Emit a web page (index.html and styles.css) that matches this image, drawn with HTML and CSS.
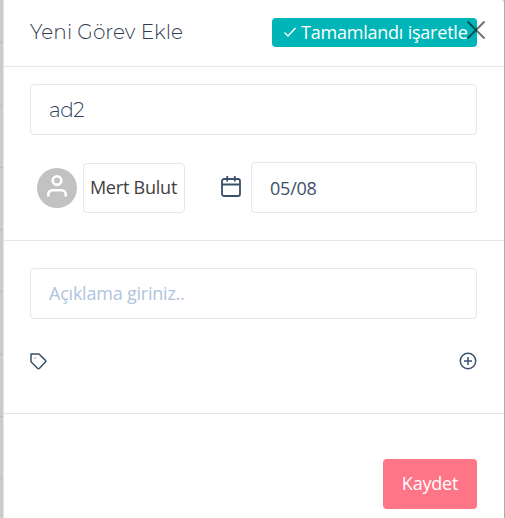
FILE: index.html
```html
<!DOCTYPE html>
<html lang="tr">
<head>
<meta charset="utf-8">
<title>Yeni Görev Ekle</title>
<link rel="stylesheet" href="styles.css">
</head>
<body>
<main class="modal">
  <header class="header">
    <h1 class="title">Yeni Görev Ekle</h1>
    <button class="complete">
      <svg width="14" height="12" viewBox="0 0 14 12" fill="none" stroke="currentColor" stroke-width="1.4"><path d="M1.5 6.5 5 10 12.5 2"/></svg>
      <span>Tamamlandı işaretle</span>
    </button>
    <button class="close" aria-label="Kapat">
      <svg width="20" height="20" viewBox="0 0 20 20" fill="none" stroke="#000" stroke-width="2"><path d="M1.5 1.5 18.5 18.5M18.5 1.5 1.5 18.5"/></svg>
    </button>
  </header>
  <section class="section details">
    <div class="field name">ad2</div>
    <div class="row">
      <div class="avatar">
        <svg width="20" height="22" viewBox="0 0 20 22" fill="none" stroke="#fff" stroke-width="2.6"><circle cx="10" cy="5.6" r="4.3"/><path d="M1.3 21.5v-2.2a4 4 0 0 1 4-4h9.4a4 4 0 0 1 4 4v2.2"/></svg>
      </div>
      <div class="assignee">Mert Bulut</div>
      <svg class="calendar" width="20" height="21" viewBox="0 0 20 21" fill="none" stroke="#3b506c" stroke-width="1.8"><rect x="1" y="3" width="18" height="17" rx="2"/><path d="M1 8.5h18M6.2 0v5.5M13.8 0v5.5"/></svg>
      <div class="field date">05/08</div>
    </div>
  </section>
  <section class="section notes">
    <div class="field placeholder">Açıklama giriniz..</div>
    <div class="tools">
      <svg width="17" height="17" viewBox="0 0 17 17" fill="none" stroke="#3b506c" stroke-width="1.5" stroke-linejoin="round"><path d="M1 1h8l6.4 6.4q.8.8 0 1.6L9.500 15.300q-1 .9-2 0L1 8.800Z"/><circle cx="5.100" cy="4.900" r=".6" fill="#3b506c" stroke="none"/></svg>
      <svg width="18" height="18" viewBox="0 0 18 18" fill="none" stroke="#3b506c" stroke-width="1.500"><circle cx="9" cy="9" r="7.700"/><path d="M5 9h8M9 5v8"/></svg>
    </div>
  </section>
  <footer class="footer"><button class="save">Kaydet</button></footer>
</main>
</body>
</html>
```
FILE: styles.css
```css
* { box-sizing: border-box; }

body {
  margin: 0;
  height: 518px;
  overflow: hidden;
  padding: 0 1px 0 3px;
  font-family: "Open Sans", sans-serif;
  font-size: 18px;
  letter-spacing: -.22px;
  color: #3b506c;
  background:
    linear-gradient(#adadad, #adadad) right / 1px 100% no-repeat,
    repeating-linear-gradient(#cbcbcb 0 61.300px, #b8b8b8 61.300px 62.300px) 0 -19px / 100% 600px;
}

button {
  border: 0;
  padding: 0;
  font: inherit;
  letter-spacing: inherit;
}

svg { display: block; flex: none; }

.modal {
  height: 518px;
  background: #fff;
  border-left: 1px solid #e5e5e5;
  border-top-right-radius: 3px;
}

.header {
  position: relative;
  height: 67px;
  padding: 0 27px 2px 26px;
  display: flex;
  align-items: center;
  justify-content: space-between;
  border-bottom: 1px solid #e4e6f0;
}

.title {
  margin: 0;
  font: 300 20px/24px Montserrat, Inter, sans-serif;
  letter-spacing: .06px;
  color: #2f3a4c;
  white-space: nowrap;
}

.complete {
  width: 205px;
  height: 29px;
  padding-left: 11px;
  display: flex;
  align-items: center;
  gap: 4px;
  border-radius: 4px;
  background: #00b5b8;
  color: #fff;
  white-space: nowrap;
}

.close {
  position: absolute;
  top: 20px;
  right: 18px;
  background: none;
  opacity: .55;
}

.section { padding: 0 27px 0 26px; }

.details {
  height: 174px;
  padding-top: 17px;
  border-bottom: 1px solid #e4e6f0;
}

.field {
  height: 51px;
  padding: 0 18px 1px;
  display: flex;
  align-items: center;
  border: 1px solid #e4e6f0;
  border-radius: 4px;
}

.name {
  padding-bottom: 0;
  font: 300 20px/24px Montserrat, Inter, sans-serif;
  letter-spacing: -.4px;
  color: #2c405c;
}

.row {
  margin-top: 27px;
  padding-left: 7px;
  display: flex;
  align-items: center;
}

.avatar {
  width: 40px;
  height: 40px;
  padding-bottom: 3px;
  display: grid;
  place-items: center;
  border-radius: 50%;
  background: #c2c2c2;
}

.assignee {
  width: 102px;
  height: 50px;
  padding: 0 1px 1px 0;
  margin-left: 6px;
  display: flex;
  align-items: center;
  justify-content: center;
  border: 1px solid #e4e6f0;
  border-radius: 4px;
  color: #404040;
  white-space: nowrap;
}

.calendar { margin: 0 10px 3px 36px; }

.date { flex: 1; padding-bottom: 0; }

.notes {
  height: 173px;
  padding-top: 27px;
  border-bottom: 1px solid #e5e5e5;
}

.placeholder { color: #b0c4de; }

.tools {
  margin-top: 33px;
  display: flex;
  align-items: center;
  justify-content: space-between;
}

.footer {
  padding: 45px 27px 0 0;
  display: flex;
  justify-content: flex-end;
}

.save {
  width: 94px;
  height: 50px;
  padding-bottom: 2px;
  border-radius: 4px;
  background: #ff7588;
  color: #fff;
}
```
